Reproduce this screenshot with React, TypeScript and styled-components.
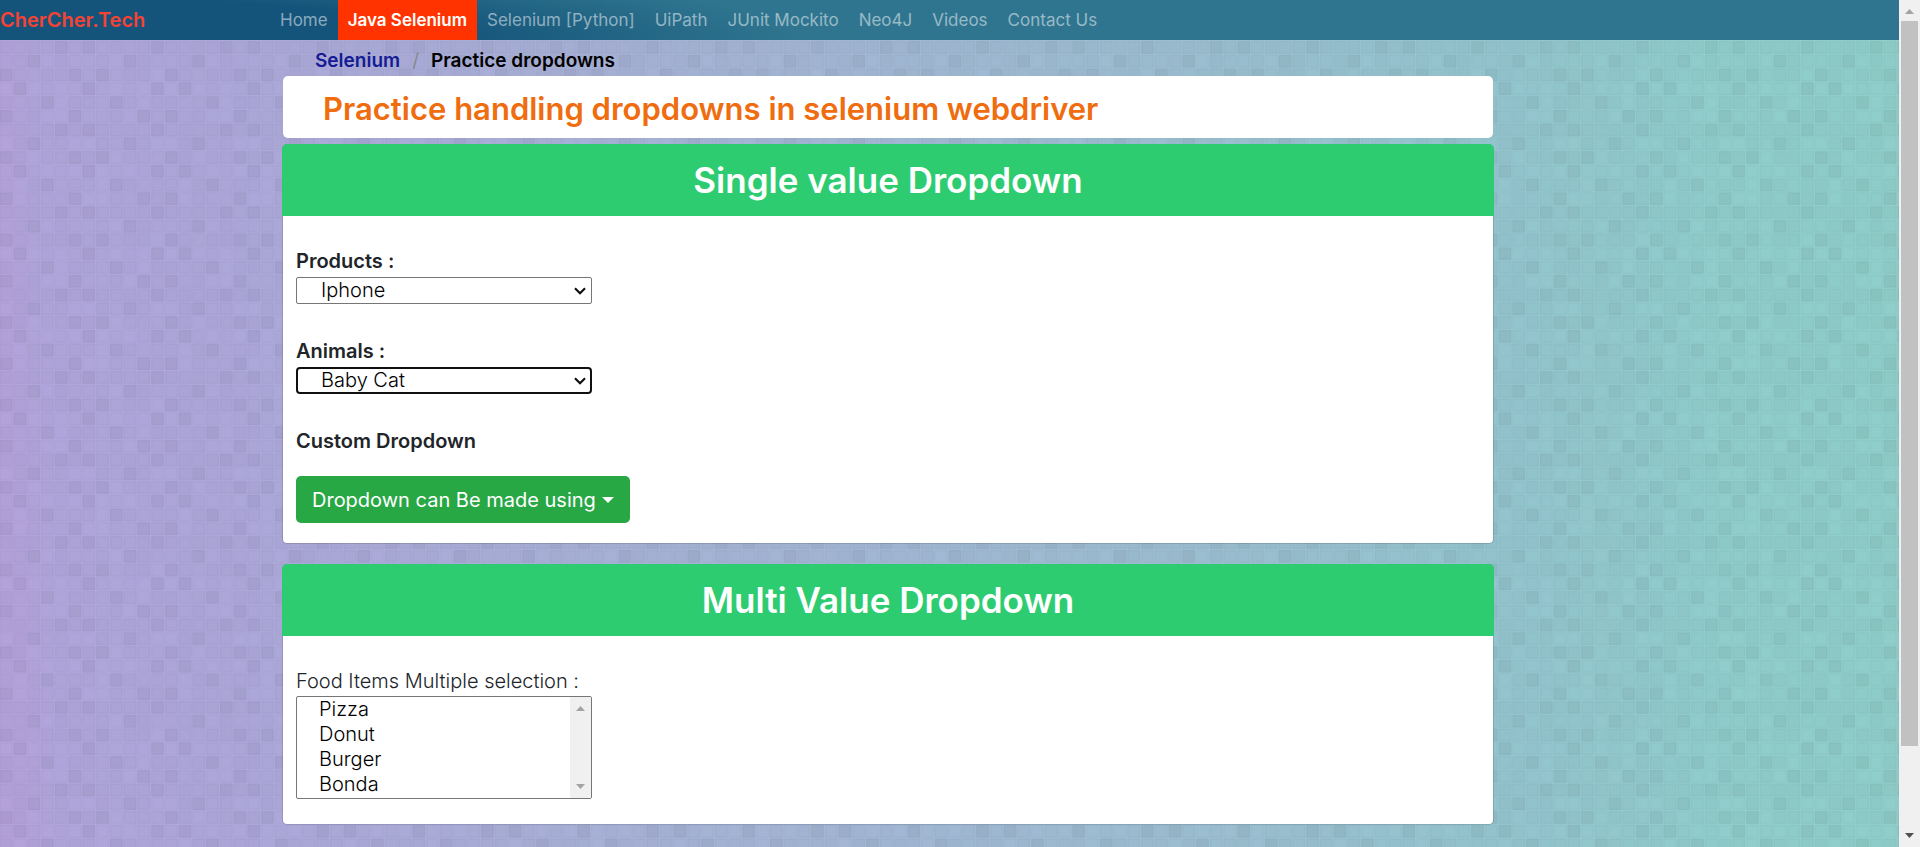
import React, { useState } from 'react';
import styled, { createGlobalStyle, css } from 'styled-components';

/* Mosaic overlay: a 12 x 12 block of square tiles, some of them darker. */
const DARK_TILES = [
  [4, 6, 11],
  [2, 9],
  [0, 5, 7],
  [1, 6, 11],
  [3, 8],
  [0, 5, 10],
];

const buildMosaic = () => {
  const cells: string[] = [];
  for (let row = 0; row < 12; row += 1) {
    const dark = DARK_TILES[(row + 3) % 6];
    for (let col = 0; col < 12; col += 1) {
      const shade = dark.includes(col) ? 0.05 : [0.01, 0.025, 0, 0.018][(row * 3 + col * 2 + ((row * col) % 3)) % 4];
      const x = col * 11;
      const y = row * 11;
      cells.push(
        `<rect x='${x}' y='${y}' width='10' height='10' fill='black' fill-opacity='${shade}'/>` +
          `<rect x='${x + 0.5}' y='${y + 0.5}' width='9' height='9' fill='none' stroke='black' stroke-opacity='0.02'/>`,
      );
    }
  }
  const svg = `<svg xmlns='http://www.w3.org/2000/svg' width='165' height='165' viewBox='0 0 132 132'>${cells.join('')}</svg>`;
  return `url("data:image/svg+xml,${encodeURIComponent(svg).replace(/'/g, '%27')}")`;
};

const MOSAIC = buildMosaic();

const CHEVRON = `url("data:image/svg+xml,${encodeURIComponent(
  '<svg xmlns="http://www.w3.org/2000/svg" width="12" height="8" viewBox="0 0 12 8"><path d="M1 1.2 6 6.2 11 1.2" fill="none" stroke="#101010" stroke-width="2.2"/></svg>',
)}")`;

const GlobalStyle = createGlobalStyle`
  *, *::before, *::after { box-sizing: border-box; }
  body {
    margin: 0;
    color: #212529;
    font: 400 20px/30px Inter, "Liberation Sans", sans-serif;
  }
`;

const Window = styled.div`
  display: flex;
  min-height: 100vh;
`;

const Page = styled.div`
  flex: 1;
  min-width: 0;
  background-color: #a0b0d0;
  background-image: ${MOSAIC},
    linear-gradient(88deg, #b5a0da 0%, #b0a5da 3%, #aca8d9 15%, #a5b3d5 37%, #9bbed0 63%, #93c5ce 80%, #90cdcb 90%, #8fceca 100%);
`;

const Navbar = styled.nav`
  display: flex;
  height: 40px;
  background: radial-gradient(800px 80px at 0 100%, #14547a 55%, #2f758f 100%);
`;

const Brand = styled.a`
  flex: 0 0 270px;
  color: #f44336;
  font-weight: 600;
  line-height: 40px;
  text-decoration: none;
`;

const NavLinks = styled.ul`
  display: flex;
  margin: 0;
  padding: 0;
  list-style: none;
`;

const NavLink = styled.a<{ $active?: boolean }>`
  display: block;
  padding: 0 10px;
  color: rgba(255, 255, 255, 0.5);
  font-size: 17px;
  line-height: 40px;
  text-decoration: none;
  white-space: nowrap;
  ${(p) =>
    p.$active &&
    css`
      background: #ff3300;
      color: #fff;
      font-weight: 600;
    `}
`;

const Main = styled.main`
  padding: 0 405px 20px 282px;
`;

const Breadcrumb = styled.ol`
  display: flex;
  gap: 12px;
  margin: 0;
  padding: 6px 33px 0;
  color: #000;
  font-size: 19px;
  font-weight: 600;
  list-style: none;
`;

const Crumb = styled.li`
  & + &::before {
    content: '/';
    padding-right: 12px;
    color: #85898e;
    font-weight: 400;
  }
  a {
    color: #151b93;
    text-decoration: none;
  }
`;

const PageTitle = styled.h1`
  margin: 0 1px 6px;
  padding: 13px 40px 9px;
  border-radius: 5px;
  background: #fff;
  color: #ef6c0f;
  font-size: 31px;
  font-weight: 600;
  line-height: 40px;
`;

const Card = styled.section`
  margin-bottom: 20px;
  border: 1px solid rgba(0, 0, 0, 0.125);
  border-radius: 5px;
  background: #fff;
  background-clip: padding-box;
`;

const CardHeader = styled.h2`
  margin: -1px -1px 0;
  padding: 15px;
  border-radius: 5px 5px 0 0;
  background: #2ecc71;
  color: #fff;
  font-size: 35px;
  font-weight: 600;
  line-height: 42px;
  text-align: center;
`;

const CardBody = styled.div<{ $bottom: number }>`
  padding: 30px 13px ${(p) => p.$bottom}px;
`;

const Field = styled.div`
  display: flex;
  flex-direction: column;
  align-items: flex-start;
  gap: 1px;
  margin-bottom: 32px;
`;

const Label = styled.label<{ $light?: boolean }>`
  font-weight: ${(p) => (p.$light ? 300 : 600)};
`;

const SubHeading = styled.h3`
  margin: 0 0 20px;
  font-size: 20px;
  font-weight: 600;
  line-height: 30px;
`;

const Select = styled.select<{ $current?: boolean }>`
  appearance: none;
  width: 296px;
  height: 27px;
  padding: 0 24px;
  border: 1px solid #767676;
  border-radius: 2px;
  outline: none;
  background: #fff ${CHEVRON} right 5px center no-repeat;
  color: #000;
  font: 300 20px/25px Inter, "Liberation Sans", sans-serif;
  ${(p) =>
    p.$current &&
    css`
      padding: 0 23px;
      border: 2px solid #101010;
      border-radius: 4px;
      background-position: right 4px center;
      line-height: 23px;
    `}
`;

const Button = styled.button`
  display: flex;
  align-items: center;
  gap: 6px;
  height: 47px;
  padding: 0 16px;
  border: 0;
  border-radius: 5px;
  background: #28a745;
  color: #fff;
  font: 400 20px/30px Inter, "Liberation Sans", sans-serif;
`;

const Caret = styled.span`
  border: 6px solid transparent;
  border-top-color: #fff;
  border-bottom: 0;
`;

const ListFrame = styled.div`
  display: flex;
  width: 296px;
  height: 103px;
  border: 1px solid #767676;
  border-radius: 2px;
  background: #fff;
`;

const ListBox = styled.select`
  flex: 1;
  min-width: 0;
  padding: 0;
  border: 0;
  outline: none;
  overflow: hidden;
  background: transparent;
  color: #000;
  font: 300 20px/25px Inter, "Liberation Sans", sans-serif;
  option {
    min-height: 25px;
    padding: 0 22px;
    font-weight: 300;
  }
`;

const Rail = styled.div<{ $page?: boolean }>`
  display: flex;
  flex: 0 0 21px;
  flex-direction: column;
  background: #f0f0f0;
  ${(p) =>
    p.$page &&
    css`
      position: sticky;
      top: 0;
      height: 100vh;
    `}
`;

const RailArrow = styled.svg<{ $down?: boolean }>`
  display: block;
  width: 21px;
  height: 21px;
  transform: ${(p) => (p.$down ? 'rotate(180deg)' : 'none')};
`;

const RailTrack = styled.div`
  flex: 1;
  padding: 0 2px;
`;

const RailThumb = styled.div`
  height: 90%;
  background: #c1c1c1;
`;

const Arrow = ({ down, color = '#a3a3a3' }: { down?: boolean; color?: string }) => (
  <RailArrow $down={down} viewBox="0 0 21 21">
    <path d="M6 14h9l-4.5-5z" fill={color} />
  </RailArrow>
);

const LINKS = ['Home', 'Java Selenium', 'Selenium [Python]', 'UiPath', 'JUnit Mockito', 'Neo4J', 'Videos', 'Contact Us'];
const PRODUCTS = ['Iphone', 'Google', 'Bing', 'Yahoo'];
const ANIMALS = ['Baby Cat', 'Big Baby Cat', 'Puppy', 'Elephant'];
const FOODS = ['Pizza', 'Donut', 'Burger', 'Bonda'];

const options = (items: string[]) => items.map((item) => <option key={item}>{item}</option>);

export default function App() {
  const [product, setProduct] = useState('Iphone');
  const [animal, setAnimal] = useState('Baby Cat');

  return (
    <Window>
      <GlobalStyle />
      <Page>
        <Navbar>
          <Brand href="#">CherCher.Tech</Brand>
          <NavLinks>
            {LINKS.map((link) => (
              <li key={link}>
                <NavLink href="#" $active={link === 'Java Selenium'}>
                  {link}
                </NavLink>
              </li>
            ))}
          </NavLinks>
        </Navbar>
        <Main>
          <Breadcrumb>
            <Crumb>
              <a href="#">Selenium</a>
            </Crumb>
            <Crumb>Practice dropdowns</Crumb>
          </Breadcrumb>
          <PageTitle>Practice handling dropdowns in selenium webdriver</PageTitle>
          <Card>
            <CardHeader>Single value Dropdown</CardHeader>
            <CardBody $bottom={20}>
              <Field>
                <Label htmlFor="products">Products :</Label>
                <Select id="products" value={product} onChange={(e) => setProduct(e.target.value)}>
                  {options(PRODUCTS)}
                </Select>
              </Field>
              <Field>
                <Label htmlFor="animals">Animals :</Label>
                <Select id="animals" $current value={animal} onChange={(e) => setAnimal(e.target.value)}>
                  {options(ANIMALS)}
                </Select>
              </Field>
              <SubHeading>Custom Dropdown</SubHeading>
              <Button type="button" aria-haspopup="true">
                Dropdown can Be made using
                <Caret />
              </Button>
            </CardBody>
          </Card>
          <Card>
            <CardHeader>Multi Value Dropdown</CardHeader>
            <CardBody $bottom={25}>
              <Label htmlFor="foods" $light>
                Food Items Multiple selection :
              </Label>
              <ListFrame>
                <ListBox id="foods" multiple size={4}>
                  {options(FOODS)}
                </ListBox>
                <Rail aria-hidden="true">
                  <Arrow />
                  <RailTrack />
                  <Arrow down />
                </Rail>
              </ListFrame>
            </CardBody>
          </Card>
        </Main>
      </Page>
      <Rail $page aria-hidden="true">
        <Arrow />
        <RailTrack>
          <RailThumb />
        </RailTrack>
        <Arrow down color="#505050" />
      </Rail>
    </Window>
  );
}
